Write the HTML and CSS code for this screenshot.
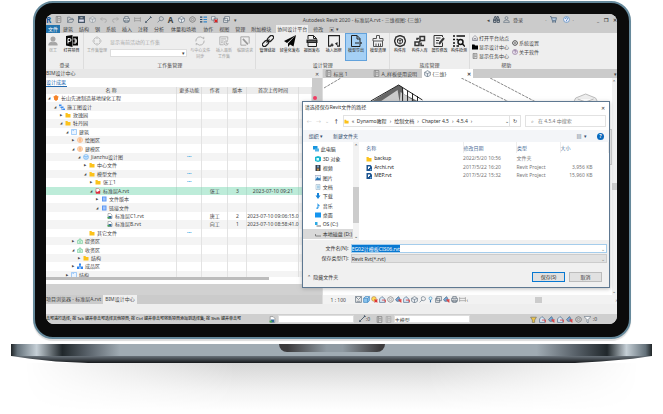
FILE: index.html
```html
<!DOCTYPE html>
<html lang="zh-CN">
<head>
<meta charset="utf-8">
<title>Autodesk Revit 2020</title>
<link rel="stylesheet" href="styles.css">
</head>
<body>
<svg class="defs" aria-hidden="true">
  <symbol id="folder" viewBox="0 0 12 12"><path fill="#fcc21b" d="M1 2h4l1 2h5v7H1z"/></symbol>
  <symbol id="doc" viewBox="0 0 12 12"><path fill="#5c97f5" d="M2 1h9v10H2z"/><path stroke="#fff" d="M4 4h5M4 6h5M4 8h5"/></symbol>
  <symbol id="box" viewBox="0 0 12 12"><path fill="#eaf4ff" stroke="#58a5f5" d="M1 1h10v10H1z"/><path stroke="#58a5f5" d="M3 3h3"/></symbol>
  <symbol id="target" viewBox="0 0 12 12"><circle cx="6" cy="6" r="5" fill="#fff3e6" stroke="#f59345"/><path fill="none" stroke="#f59345" d="M4 4h4v4H4zM6 2v8"/></symbol>
  <symbol id="globe" viewBox="0 0 12 12"><circle cx="6" cy="6" r="5" fill="#d7ecff" stroke="#4ca0ee"/><path fill="none" stroke="#4ca0ee" d="M2 5h8M3 8h6"/></symbol>
  <symbol id="root" viewBox="0 0 12 12"><path fill="#f5842a" d="M6 0l6 4-2 1v4l-4 3-4-3V5L0 4z"/></symbol>
  <symbol id="flow" viewBox="0 0 12 12"><path fill="#3b8cf0" d="M0 1h5v3H0zM4 5h5v3H4zM7 9h5v3H7z"/><path fill="none" stroke="#3b8cf0" d="M2 3v4h3M5 7v4h3"/></symbol>
  <symbol id="rvt" viewBox="0 0 12 12"><path fill="#fff" stroke="#777" d="M2 1h5l3 3v7H2z"/><path fill="#356b9b" d="M3 6h6v5H3z"/><path fill="#4caf50" d="M1 8h4v3H1z"/></symbol>
  <symbol id="rvtred" viewBox="0 0 12 12"><path fill="#fff" stroke="#b55" d="M2 1h5l3 3v7H2z"/><path fill="#e02d3c" d="M1 5l3 3 6-3v6H2z"/></symbol>
  <symbol id="zone" viewBox="0 0 12 12"><path fill="#e5f7ec" stroke="#57c084" d="M1 5h3V2h4v3h3v6H1z"/><path stroke="#57c084" d="M3 8h6M6 3v7"/></symbol>
  <symbol id="cubes" viewBox="0 0 12 12"><path fill="#2f86f0" d="M4 1h4v4H4zM0 7h5v5H0zM7 7h5v5H7zM5 5h2v3H5z"/></symbol>
  <symbol id="house" viewBox="0 0 12 12"><path fill="#eee" stroke="#556" d="M1 6l5-5 5 5v5H1zM4 11V7h4v4"/></symbol>
  <symbol id="cube" viewBox="0 0 12 12"><path fill="#e8edf2" stroke="#567" d="M1 4l5-3 5 3v5l-5 3-5-3zM1 4l5 2 5-2M6 6v6"/></symbol>
  <symbol id="bluecube" viewBox="0 0 12 12"><path fill="#8cc4ee" stroke="#2a78b8" d="M1 4l3-3h7v7l-3 3H1zM1 4h7l3-3M8 4v7"/></symbol>
  <symbol id="open" viewBox="0 0 12 12"><path fill="none" stroke="#567" d="M1 11V2h4l1 2h4v2M1 11l3-5h8l-3 5z"/></symbol>
  <symbol id="save" viewBox="0 0 12 12"><path fill="#dde" stroke="#456" stroke-width="2" d="M1 1h10v10H1zM3 1v4h6V1"/></symbol>
  <symbol id="undo" viewBox="0 0 12 12"><path fill="none" stroke="#a5a5a5" stroke-width="1.3" d="M4 2L1 5l3 3M1 5h7q3 0 3 3t-3 3"/></symbol>
  <symbol id="redo" viewBox="0 0 12 12"><path fill="none" stroke="#a5a5a5" stroke-width="1.3" d="M8 2l3 3-3 3M11 5H4Q1 5 1 8t3 3"/></symbol>
  <symbol id="print" viewBox="0 0 12 12"><path fill="#eee" stroke="#456" d="M3 4V1h6v3M1 4h10v5H1zM3 7h6v4H3z"/></symbol>
  <symbol id="measure" viewBox="0 0 12 12"><path fill="none" stroke="#888" d="M1 2v8M11 2v8M1 4h10M1 8h10"/></symbol>
  <symbol id="pen" viewBox="0 0 12 12"><path stroke="#456" stroke-width="1.500" d="M2 10l8-8"/><path fill="#456" d="M0 12l1-4 3 3zM9 0l3 3-2 1-2-2z"/></symbol>
  <symbol id="tag" viewBox="0 0 12 12"><path fill="none" stroke="#567" d="M1 11l4-4M4 4q0-3 3-3t4 3-3 4-4-4"/></symbol>
  <symbol id="list" viewBox="0 0 12 12"><path stroke="#246" stroke-width="2" d="M0 2h4M0 6h4M0 10h4"/><path stroke="#38c" stroke-width="2" d="M6 2h6M6 6h6M6 10h6"/></symbol>
  <symbol id="close-win" viewBox="0 0 12 12"><path fill="#eee" stroke="#567" d="M1 1h6v6H1zM5 4h6v7H5z"/><path stroke="#d22" stroke-width="2" d="M6 6l5 5M11 6l-5 5"/></symbol>
  <symbol id="win" viewBox="0 0 12 12"><path fill="#eee" stroke="#456" d="M3 1h8v7H3zM1 4h7v7H1z"/></symbol>
  <symbol id="scene" viewBox="0 0 12 12"><path fill="#eee" stroke="#456" d="M1 1h10v10H1zM1 1l5 5 5-5M3 9h6"/></symbol>
  <symbol id="bino" viewBox="0 0 12 12"><path fill="none" stroke="#345" stroke-width="1.4" d="M3 1h2v6H1zM7 1h2l2 6H7zM1 7h4v4H1zM7 7h4v4H7zM5 4h2"/></symbol>
  <symbol id="person" viewBox="0 0 12 12"><circle cx="6" cy="3.5" r="2.5" fill="none" stroke="#567"/><path fill="none" stroke="#567" d="M1 11q0-4 5-4t5 4z"/></symbol>
  <symbol id="bulb" viewBox="0 0 12 12"><circle cx="6" cy="4" r="2.500" fill="#dff" stroke="#3b78b0"/><path stroke="#3b78b0" stroke-width="2" d="M6 7v4"/></symbol>
  <symbol id="cart" viewBox="0 0 12 12"><path fill="#b9cce0" stroke="#246" d="M0 1h2l2 7h6l1-5H3"/><path fill="#246" d="M4 9h2v2H4zM8 9h2v2H8z"/></symbol>
  <symbol id="ask" viewBox="0 0 12 12"><circle cx="6" cy="6" r="5" fill="#eef" stroke="#357ab5"/><path fill="none" stroke="#357ab5" stroke-width="1.3" d="M4 5q0-2 2-2t2 1.500T6 7v2"/></symbol>
  <symbol id="askp" viewBox="0 0 12 12"><circle cx="6" cy="6" r="5" fill="#f5eef7" stroke="#6b4a7b"/><path fill="none" stroke="#6b4a7b" stroke-width="1.3" d="M4 5q0-2 2-2t2 1.500T6 7v2"/></symbol>
  <symbol id="user" viewBox="0 0 24 24"><path fill="#a6a6a6" d="M12 1a6 6 0 016 7c0 3-3 6-6 6s-6-3-6-6a6 6 0 016-7zM1 23v-4q2-4 7-5 4 2 8 0 5 1 7 5v4z"/></symbol>
  <symbol id="project" viewBox="0 0 24 24"><path fill="#080808" d="M0 2l13-2v24L0 21zM14 3h10v18H14z"/><path fill="none" stroke="#fff" stroke-width="2" d="M4 17V7h3q3 0 3 3t-3 3H4M15 8h5v8h-5M17 12h5"/></symbol>
  <symbol id="workset" viewBox="0 0 24 24"><path fill="none" stroke="#a6a6a6" stroke-width="2" d="M9 4a9 9 0 00-5 5M15 4a9 9 0 015 5M20 15a9 9 0 01-5 5M9 20a9 9 0 01-5-5M12 1v6M12 17v6M1 12h6M17 12h6"/></symbol>
  <symbol id="sync" viewBox="0 0 24 24"><path fill="none" stroke="#a9a9a9" stroke-width="2" d="M2 13a10 10 0 0117-8l2 2V2M22 11A10 10 0 015 19l-2-2v5"/></symbol>
  <symbol id="latest" viewBox="0 0 24 24"><path fill="none" stroke="#a9a9a9" stroke-width="2" d="M11 21H2V2h19v7M5 7h12M5 12h6M5 16h4M22 17a5 5 0 11-2-4v-3M17 14v4h3"/></symbol>
  <symbol id="request" viewBox="0 0 24 24"><path fill="none" stroke="#999" stroke-width="2" d="M15 22H2V2h20v16"/><path stroke="#999" stroke-width="4" d="M7 7l12 13"/></symbol>
  <symbol id="chain" viewBox="0 0 24 24"><g fill="none" stroke="#222" stroke-width="2.500"><rect x="10" y="3" width="14" height="8" rx="4" transform="rotate(-45 17 7)"/><rect x="0" y="13" width="14" height="8" rx="4" transform="rotate(-45 7 17)"/><path d="M9 15l6-6"/></g></symbol>
  <symbol id="plane" viewBox="0 0 24 24"><path fill="#050505" d="M24 0L0 12l6 4zM24 0L8 17v7l4-5 7 4z"/></symbol>
  <symbol id="publish" viewBox="0 0 24 24"><path fill="none" stroke="#222" stroke-width="2" d="M4 8V1h11l6 6v2M4 16v7h17v-7M15 1v6h6"/><path fill="#222" d="M1 9h22v7H1z"/><path stroke="#bbb" d="M4 12.500h16"/></symbol>
  <symbol id="frame" viewBox="0 0 24 24"><path fill="none" stroke="#222" stroke-width="2.500" d="M6 22H1V1h22v21h-5M23 22h-5M8 17v6M5 20h6"/><path fill="#222" d="M14 17l5-3v8z"/></symbol>
  <symbol id="export" viewBox="0 0 24 24"><path fill="none" stroke="#222" stroke-width="2" d="M20 12V7l-6-6H3v22h17v-3M14 1v7h6M10 16h13M19 12l4 4-4 4"/></symbol>
  <symbol id="clean" viewBox="0 0 24 24"><path fill="none" stroke="#555" stroke-width="2" d="M9 7V1h6v6h7v5H2V7zM3 12v11h18V12M8 23v-6M13 23v-6M17 23v-6"/></symbol>
  <symbol id="library" viewBox="0 0 24 24"><path fill="none" stroke="#333" stroke-width="3" d="M12 1l8 3 3 8-3 8-8 3-8-3-3-8 3-8z"/><path fill="none" stroke="#333" stroke-width="2" d="M7 9l5-2 5 2v6l-5 3-5-3zM7 9l5 2 5-2M12 11v7"/></symbol>
  <symbol id="import" viewBox="0 0 24 24"><path fill="none" stroke="#333" stroke-width="3" d="M12 3h9v8h-9zM2 14h8v7H2zM14 15v6h6M6 10V7h4M9 15l6-5"/></symbol>
  <symbol id="edit" viewBox="0 0 24 24"><path fill="none" stroke="#333" stroke-width="2" d="M19 15v8H2V1h17v3M6 6h9M6 11h6M6 16h4"/><path stroke="#333" stroke-width="4" d="M12 18L22 6"/></symbol>
  <symbol id="detect" viewBox="0 0 24 24"><path stroke="#111" stroke-width="3" d="M0 2h4M7 2h17M0 9h4M0 16h4M0 22h4M7 9h3M7 22h5"/><circle cx="15" cy="14" r="5" fill="none" stroke="#111" stroke-width="3"/><path stroke="#111" stroke-width="3" d="M19 18l5 5"/></symbol>
  <symbol id="gear" viewBox="0 0 12 12"><path fill="none" stroke="#333" stroke-width="1.500" d="M6 1l4 2 1 3-1 3-4 2-4-2-1-3 1-3z"/><circle cx="6" cy="6" r="2" fill="none" stroke="#333"/></symbol>
  <symbol id="blackfolder" viewBox="0 0 12 12"><path d="M0 1h5l1 2h6v8H0z"/></symbol>
  <symbol id="sheet" viewBox="0 0 12 12"><path fill="#ddd" stroke="#666" d="M2 1h8v10H2zM4 1v10M5 4h4M5 7h4"/></symbol>
  <symbol id="pc" viewBox="0 0 12 12"><path fill="#1795df" d="M0 0h9v7H0z"/><path fill="#50b5e9" d="M4 5h8v6H4z"/></symbol>
  <symbol id="obj3d" viewBox="0 0 12 12"><path fill="#18b5cf" d="M0 2l6-2 6 2v8l-6 2-6-2z"/><path fill="#d8ffff" d="M3 4h5v5H3z"/></symbol>
  <symbol id="video" viewBox="0 0 12 12"><path fill="#38424e" d="M1 0h10v12H1z"/><path fill="#789fc4" d="M4 1h4v4H4z"/><path fill="#c88e45" d="M4 7h4v4H4z"/></symbol>
  <symbol id="photo" viewBox="0 0 12 12"><path fill="#d9edfa" stroke="#88a" d="M0 1h12v10H0z"/><path fill="#2375b7" d="M1 9l4-5 3 3 3-2v5H1z"/></symbol>
  <symbol id="page" viewBox="0 0 12 12"><path fill="#f4faff" stroke="#8aa4b8" d="M2 1h8v10H2z"/><path stroke="#4b9ac8" d="M4 4h5M4 6h5M4 8h5"/></symbol>
  <symbol id="down" viewBox="0 0 12 12"><path fill="#1683d8" d="M4 0h4v5h3l-5 7-5-7h3z"/></symbol>
  <symbol id="music" viewBox="0 0 12 12"><path fill="#168fe5" d="M5 0q1 3 4 4v3L7 5v5q-1 2-4 2V9h2z"/></symbol>
  <symbol id="desk" viewBox="0 0 12 12"><path fill="#1595ef" d="M0 1h12v10H0z"/></symbol>
  <symbol id="drive" viewBox="0 0 12 12"><path fill="#777" d="M3 9h9v2H3z"/><path fill="#2daae4" d="M0 2h5v6H0z"/></symbol>
  <symbol id="drived" viewBox="0 0 12 12"><path fill="none" stroke="#666" stroke-width="1.500" d="M1 6v4h11"/></symbol>
  <symbol id="revit" viewBox="0 0 12 12"><path fill="#1c5591" d="M1 0h8l3 3v9H1z"/><path fill="#fff" d="M4 3h4v3H6v2H4z"/><path fill="#70a8dc" d="M8 8h3v3H8z"/></symbol>
  <symbol id="lamp" viewBox="0 0 12 12"><circle cx="5" cy="5" r="4" fill="#ffdc55" stroke="#a75"/><path stroke="#d33" stroke-width="2" d="M6 6l5 5M11 6l-5 5"/></symbol>
  <symbol id="crop" viewBox="0 0 12 12"><path fill="#dbe8f5" stroke="#357" d="M1 5l4-4 5 4v6H1z"/><path fill="none" stroke="#d44" stroke-width="1.500" d="M5 7h6v4"/></symbol>
  <symbol id="pick" viewBox="0 0 12 12"><path fill="#79a8d5" stroke="#357" d="M1 6l5-5 2 3v5H3z"/><path stroke="#d44" stroke-width="2" d="M6 6l5 5M10 5v4"/></symbol>
  <symbol id="filter" viewBox="0 0 12 12"><path fill="#fff" stroke="#567" d="M0 1h12L7 6v6L5 10V6z"/></symbol>
  <symbol id="cup" viewBox="0 0 12 12"><path fill="#edc348" stroke="#665" d="M1 2h10L8 7v4H4V7z"/></symbol>
</svg>

<main class="laptop">
<div class="lid">
<div class="screen">
  <header class="titlebar">
    <div class="quick">
      <b class="logo">R</b><svg><use href="#sheet"/></svg><svg><use href="#open"/></svg><svg><use href="#save"/></svg><svg class="dim"><use href="#cube"/></svg><svg><use href="#undo"/></svg><svg><use href="#redo"/></svg><svg><use href="#print"/></svg><svg><use href="#measure"/></svg><svg><use href="#pen"/></svg><svg><use href="#tag"/></svg><b class="letter">A</b><svg><use href="#cube"/></svg><svg class="dim"><use href="#gear"/></svg><svg><use href="#list"/></svg><svg><use href="#close-win"/></svg><svg><use href="#win"/></svg><span>▾</span>
    </div>
    <h1>Autodesk Revit 2020 - 标准层A.rvt - 三维视图: {三维}</h1>
    <div class="account"><span>◂</span><svg><use href="#bino"/></svg><svg><use href="#person"/></svg><span>登录</span><span class="push">·</span><svg><use href="#cart"/></svg><svg class="apart"><use href="#ask"/></svg><span>·</span><span class="window"><b>_</b><b>❐</b><b>✕</b></span></div>
  </header>
  <nav class="tabs">
    <a class="file" href="#">文件</a><a href="#">建筑</a><a href="#">结构</a><a href="#">钢</a><a href="#">系统</a><a href="#">插入</a><a href="#">注释</a><a href="#">分析</a><a class="site" href="#">体量和场地</a><a href="#">协作</a><a href="#">视图</a><a href="#">管理</a><a href="#">附加模块</a><a class="on" href="#">协同设计平台</a><a href="#">修改</a><a href="#">▣ ▾</a>
  </nav>
  <section class="ribbon">
    <div class="group g1"><div class="tools">
      <button class="tool off small"><svg><use href="#user"/></svg>张工</button><button class="tool"><svg><use href="#project"/></svg>打开项目</button>
    </div><footer>登录</footer></div>
    <div class="group g2"><div class="tools">
      <button class="tool off wide"><svg><use href="#workset"/></svg>工作集管理</button>
      <div class="combo"><label for="ws">显示当前活动的工作集</label><div class="wsbox"><select id="ws"><option></option></select><span>▾</span></div></div>
      <button class="tool off wide"><svg><use href="#sync"/></svg>与中心文件<br>同步</button><button class="tool off"><svg><use href="#latest"/></svg>插入最新<br>工作集</button><button class="tool off"><svg><use href="#request"/></svg>编辑请求</button>
    </div><footer>工作集管理</footer></div>
    <div class="group g3"><div class="tools">
      <button class="tool"><svg><use href="#chain"/></svg>管理链接</button><button class="tool"><svg><use href="#plane"/></svg>轻量化发布</button><button class="tool"><svg><use href="#publish"/></svg>视图发布</button><button class="tool"><svg><use href="#frame"/></svg>插入图框</button><button class="tool picked"><svg><use href="#export"/></svg>模型导出</button><button class="tool"><svg><use href="#clean"/></svg>模型清理</button>
    </div><footer>设计管理</footer></div>
    <div class="group g4"><div class="tools">
      <button class="tool"><svg><use href="#library"/></svg>构件库</button><button class="tool"><svg><use href="#import"/></svg>构件入库</button><button class="tool"><svg><use href="#edit"/></svg>属性修改</button><button class="tool"><svg><use href="#detect"/></svg>构件检测</button>
    </div><footer>族库管理</footer></div>
    <div class="group g5"><div class="tools links">
      <div><a href="#"><svg><use href="#house"/></svg>打开平台站点</a><a href="#"><svg><use href="#blackfolder"/></svg>显示设计中心</a><a href="#"><svg><use href="#sheet"/></svg>显示任务中心</a></div>
      <div><a href="#"><svg><use href="#gear"/></svg>系统设置</a><a href="#"><svg><use href="#askp"/></svg>关于软件</a></div>
    </div><footer>帮助</footer></div>
  </section>

  <div class="work">
    <section class="browser">
      <div class="panelhead"><span>BIM设计中心</span><button aria-label="关闭">✕</button></div>
      <div class="panelbody">
        <div class="results">
          <h2>设计成果</h2>
          <table>
            <thead><tr><th>名 称</th><th>更多功能</th><th>作者</th><th>版本</th><th>首次上传时间</th><th></th></tr></thead>
            <tbody>
              <tr><td class="l0"><i>◢</i><svg><use href="#root"/></svg>长山先进制造基地绿化工程</td><td></td><td></td><td></td><td></td><td></td></tr>
              <tr><td class="l1"><i>◢</i><svg><use href="#flow"/></svg>施工图设计</td><td></td><td></td><td></td><td></td><td></td></tr>
              <tr><td class="l2"><i>▶</i><svg><use href="#folder"/></svg>玫瑰园</td><td></td><td></td><td></td><td></td><td></td></tr>
              <tr><td class="l2"><i>◢</i><svg><use href="#folder"/></svg>牡丹园</td><td></td><td></td><td></td><td></td><td></td></tr>
              <tr><td class="l3"><i>◢</i><svg><use href="#box"/></svg>建筑</td><td></td><td></td><td></td><td></td><td></td></tr>
              <tr><td class="l4"><i>▶</i><svg><use href="#target"/></svg>绘图区</td><td></td><td></td><td></td><td></td><td></td></tr>
              <tr><td class="l4"><i>◢</i><svg><use href="#target"/></svg>建模区</td><td></td><td></td><td></td><td></td><td></td></tr>
              <tr><td class="l5"><i>◢</i><svg><use href="#globe"/></svg>Jianzhu设计图</td><td>•••</td><td></td><td></td><td></td><td></td></tr>
              <tr><td class="l6"><i>▶</i><svg><use href="#folder"/></svg>中心文件</td><td></td><td></td><td></td><td></td><td></td></tr>
              <tr><td class="l6"><i>◢</i><svg><use href="#folder"/></svg>模型文件</td><td>•••</td><td></td><td></td><td></td><td></td></tr>
              <tr><td class="l7"><i>▶</i><svg><use href="#folder"/></svg>张工1</td><td>•••</td><td></td><td></td><td></td><td></td></tr>
              <tr class="sel"><td class="l7"><i>◢</i><svg><use href="#rvtred"/></svg>标准层A.rvt</td><td></td><td>张工</td><td>3</td><td>2023-07-10 09:21</td><td></td></tr>
              <tr><td class="l8"><i>▶</i><svg><use href="#doc"/></svg>文件版本</td><td></td><td></td><td></td><td></td><td></td></tr>
              <tr><td class="l8"><i>◢</i><svg><use href="#doc"/></svg>链接文件</td><td></td><td></td><td></td><td></td><td></td></tr>
              <tr><td class="l9"><i></i><svg><use href="#rvt"/></svg>标准层C1.rvt</td><td></td><td>唐工</td><td>2</td><td>2023-07-10 09:06:15.0</td><td></td></tr>
              <tr><td class="l9"><i></i><svg><use href="#rvt"/></svg>标准层B.rvt</td><td></td><td>向工</td><td>1</td><td>2023-07-10 08:58:41.0</td><td></td></tr>
              <tr><td class="l6"><i></i><svg><use href="#folder"/></svg>其它文件</td><td>•••</td><td></td><td></td><td></td><td></td></tr>
              <tr><td class="l4"><i>▶</i><svg><use href="#zone"/></svg>提资区</td><td></td><td></td><td></td><td></td><td></td></tr>
              <tr><td class="l4"><i>◢</i><svg><use href="#zone"/></svg>收资区</td><td></td><td></td><td></td><td></td><td></td></tr>
              <tr><td class="l5"><i>▶</i><svg><use href="#folder"/></svg>结构</td><td></td><td></td><td></td><td></td><td></td></tr>
              <tr><td class="l4"><i>▶</i><svg><use href="#cubes"/></svg>成品区</td><td></td><td></td><td></td><td></td><td></td></tr>
              <tr><td class="l3"><i>▶</i><svg><use href="#box"/></svg>结构</td><td></td><td></td><td></td><td></td><td></td></tr>
            </tbody>
          </table>
          <div class="hscroll"></div>
        </div>
        <div class="gutter"><span class="dot"></span></div>
      </div>
      <div class="blank"></div>
      <div class="docks"><a href="#">项目浏览器 - 标准层A.rvt</a><a class="on" href="#">BIM设计中心</a></div>
    </section>

    <section class="view">
      <div class="viewtabs"><a href="#"><svg><use href="#sheet"/></svg>标高 1</a><a href="#"><svg><use href="#sheet"/></svg>A_样板使用说明</a><a class="on" href="#"><svg><use href="#cube"/></svg>{三维}<b>✕</b></a><span>▾</span></div>
      <div class="canvas">
        <svg class="model" viewBox="0 0 291 25" preserveAspectRatio="none">
          <path fill="none" stroke="#888" stroke-dasharray="3 1" d="M1 10L18 0M139 0l48 24M168 0l46 24"/>
          <path fill="#666" d="M48 24L76 7l4 2 1 7 18 9H48z"/><path fill="#ccc" d="M57 24l18-12 2 12zM78 14l12 8-4 3h-9z"/>
          <path fill="none" stroke="#222" d="M48 23L76 7l24 15M80 10v14M85 13v12M90 15v10M95 18v6"/>
          <path fill="#eee" stroke="#bbb" d="M252 24l2-4 10-4 10 4 2 4zM256 21l8 3 8-3"/>
        </svg>
        <div class="navbar"></div>
        <div class="vscroll"><span>⌃</span><i></i><span>⌄</span></div>
      </div>
      <div class="viewbar"><span class="scale">1 : 100</span><svg><use href="#scene"/></svg><svg><use href="#bluecube"/></svg><svg><use href="#lamp"/></svg><svg><use href="#crop"/></svg><svg class="dim"><use href="#gear"/></svg><svg><use href="#pick"/></svg><svg><use href="#crop"/></svg><svg><use href="#cube"/></svg><svg><use href="#tag"/></svg><svg><use href="#bulb"/></svg><svg><use href="#win"/></svg><svg><use href="#pick"/></svg><svg><use href="#print"/></svg><svg><use href="#measure"/></svg><span>‹</span><i class="thumb"></i><span class="push">›</span></div>
    </section>

    <section class="dialog" role="dialog" aria-labelledby="dt">
      <div class="dtitle"><span id="dt">请选择保存Revit文件的路径</span><button aria-label="关闭">✕</button></div>
      <div class="path">
        <span class="arrows"><em>←</em><em>→</em><em>⌄</em><b>↑</b></span>
        <div class="address"><svg><use href="#folder"/></svg><span>« &nbsp;Dynamo教程</span><span>›</span><span>绘制文档</span><span>›</span><span>Chapter 4.5</span><span>›</span><span>4.5.4</span><span>›</span><span class="push">⌄</span></div>
        <button class="refresh" aria-label="刷新">↻</button>
        <input class="search" type="text" aria-label="搜索" placeholder="⌕&nbsp; &nbsp;在 4.5.4 中搜索">
      </div>
      <div class="dtools"><button>组织 ▾</button><button>新建文件夹</button><button class="push" aria-label="视图">▤ &nbsp;▾</button><button class="help" aria-label="帮助">?</button></div>
      <div class="files">
        <ul class="places">
          <li class="top"><svg><use href="#pc"/></svg>此电脑</li><li><svg><use href="#obj3d"/></svg>3D 对象</li><li><svg><use href="#video"/></svg>视频</li><li><svg><use href="#photo"/></svg>图片</li><li><svg><use href="#page"/></svg>文档</li><li><svg><use href="#down"/></svg>下载</li><li><svg><use href="#music"/></svg>音乐</li><li><svg><use href="#desk"/></svg>桌面</li><li><svg><use href="#drive"/></svg>OS (C:)</li><li class="on"><svg><use href="#drived"/></svg>本地磁盘 (D:)</li>
        </ul>
        <div class="sidebar-scroll"><span>⌃</span><i></i><span>⌄</span></div>
        <div class="list"><table>
          <thead><tr><th>名称</th><th>修改日期</th><th>类型</th><th>大小</th></tr></thead>
          <tbody>
            <tr><td><svg><use href="#folder"/></svg>backup</td><td>2022/5/20 10:56</td><td>文件夹</td><td></td></tr>
            <tr><td><svg><use href="#revit"/></svg>Archi.rvt</td><td>2017/5/22 16:20</td><td>Revit Project</td><td>3,956 KB</td></tr>
            <tr><td><svg><use href="#revit"/></svg>MEP.rvt</td><td>2017/5/22 15:32</td><td>Revit Project</td><td>15,960 KB</td></tr>
          </tbody>
        </table></div>
      </div>
      <div class="form">
        <label for="fn">文件名(N):</label><div class="filebox"><input id="fn" type="text" value="EG02计模板CIS06.rvt"><span>⌄</span></div>
        <label for="ft">保存类型(T):</label><div class="typebox"><select id="ft"><option>Revit Rvt(*.rvt)</option></select><span>⌄</span></div>
      </div>
      <div class="actions"><button class="hide">⌃ &nbsp;隐藏文件夹</button><button class="save">保存(S)</button><button class="cancel">取消</button></div>
    </section>
  </div>
  <div class="spacer"></div>
  <footer class="status">
    <span class="hint">击可进行选择; 按 Tab 键并单击可选择其他项目; 按 Ctrl 键并单击可将新项目添加到选择集; 按 Shift 键并单击可</span>
    <svg><use href="#rvt"/></svg><select class="s1" aria-label="工作集"><option></option></select><span class="zero"><svg><use href="#pen"/></svg>:0</span><svg><use href="#sheet"/></svg><svg class="dim"><use href="#sheet"/></svg><select class="s2" aria-label="设计选项"><option>主模型</option></select>
    <span class="tray"><svg><use href="#cup"/></svg><svg><use href="#crop"/></svg><svg><use href="#pick"/></svg><svg><use href="#crop"/></svg><svg><use href="#pick"/></svg><svg class="dim"><use href="#gear"/></svg><svg><use href="#filter"/></svg>:0</span>
  </footer>
</div>
</div>
<div class="base"><div class="notch"></div></div>
<div class="under"></div>
<div class="shadow"></div>
</main>
</body>
</html>
```
FILE: styles.css
```css
* { box-sizing: border-box; }
body { margin: 0; background: #fff; overflow: hidden; color: #444; font: 5px/8px "Noto Sans", "Noto Sans CJK SC", sans-serif; }
button, input, select { font: inherit; color: inherit; margin: 0; padding: 0; border: 0; border-radius: 0; background: none; appearance: none; white-space: nowrap; }
a { color: inherit; text-decoration: none; }
h1, h2, ul { margin: 0; padding: 0; font: inherit; list-style: none; }
svg { width: 7px; height: 7px; flex: none; }
table { border-collapse: collapse; }
.defs { position: absolute; width: 0; height: 0; }
.push { margin-left: auto; }
.dim { opacity: .5; }

/* laptop body */
.laptop { padding: 1px 11px 0; }
.lid { margin: 0 21px 0 22px; padding: 11px 12px 13px 11px; background: #0b0b0b; border: 2px solid #66899b; border-radius: 20px; box-shadow: 0 2px 1px #ddd; }
.screen { position: relative; overflow: hidden; border-radius: 8px; background: #eee; white-space: nowrap; }
.base { height: 12px; margin-top: 5px; background: linear-gradient(90deg, #202527 0, #64717a 1%, #c5cfd6 4%, #20272b 8%, #59626a 12%, #a0abb3 17%, #a0abb3 82%, #59626a 88%, #20272b 93%, #c5cfd6 96%, #64717a 99%, #202527); }
.notch { width: 106px; height: 8px; margin: 0 auto; border-radius: 0 0 8px 8px; background: linear-gradient(90deg, #3c3b3d 8%, #8f9aa2 45%, #8f9aa2 60%, #3c3b3d 95%); }
.under { height: 7px; background: linear-gradient(#69727a, #15181b); clip-path: polygon(0 0, 100% 0, 97% 40%, 92% 80%, 88% 100%, 12% 100%, 7% 80%, 3% 40%); }
.shadow { height: 48px; background: linear-gradient(#d6d6d6, #f3f3f3 60%, #fff); mask-image: linear-gradient(90deg, transparent 2%, #000 35%, #000 65%, transparent 98%); }

/* title and ribbon */
.titlebar { display: flex; align-items: center; height: 11px; background: #cbcbcb; }
.quick { flex: 191; display: flex; align-items: center; justify-content: space-between; }
.logo { color: #19599b; font-size: 8px; }
.letter { font-size: 8px; }
.titlebar h1 { flex: 250; text-align: center; }
.account { flex: 130; display: flex; align-items: center; gap: 3px; }
.account .apart { margin-left: 3px; }
.window { display: flex; gap: 5px; margin-left: 20px; }
.tabs { display: flex; gap: 6px; height: 8px; background: #cbcbcb; }
.tabs .file { width: 14px; margin-right: -3px; text-align: center; color: #fff; background: #2273ad; }
.tabs .site { padding: 0 1px; }
.tabs .on { margin: 0 -1px; padding: 0 1px; background: #eee; }
.ribbon { display: flex; height: 36px; padding-right: 13%; background: #eee; }
.group { display: flex; flex-direction: column; min-width: 0; border-right: 1px solid #ddd; }
.group footer { height: 8px; line-height: 8px; text-align: center; }
.g1 { flex: 37; } .g2 { flex: 172; } .g3 { flex: 133; } .g4 { flex: 79; }
.g5 { flex: 73; border: 0; }
.tools { flex: 1; display: flex; }
.tool { flex: 21 0 0; min-width: 0; display: flex; flex-direction: column; align-items: center; padding-top: 2px; font-size: 4px; font-weight: 500; line-height: 6px; }
.tool svg { width: 12px; height: 12px; margin-bottom: 1px; }
.tool.small { flex-grow: 13; }
.tool.small svg { width: 9px; }
.tool.wide { flex-grow: 26; }
.tool.off { color: #aaa; }
.tool.off svg { width: 10px; }
.tool.picked { background: #a5d0f5; box-shadow: inset 0 0 0 1px #62a2dc; }
.combo { flex: 77 0 0; display: flex; flex-direction: column; justify-content: center; gap: 3px; color: #aaa; }
.wsbox { display: flex; height: 8px; line-height: 7px; padding-right: 1px; background: #fff; border: 1px solid #ddd; color: #444; }
.wsbox select { flex: 1; }
.links { align-items: center; gap: 3px; padding-left: 2px; }
.links div { display: flex; flex-direction: column; gap: 1px; }
.links a { display: flex; align-items: center; gap: 1px; }
.links svg { width: 6px; height: 6px; }

/* project browser */
.work { position: relative; display: flex; height: 235px; }
.browser { flex: 276; min-width: 0; display: flex; flex-direction: column; background: #fff; }
.panelhead { display: flex; justify-content: space-between; height: 9px; padding-right: 3px; background: #e7e7e7; }
.panelbody { flex: 1; min-height: 0; display: flex; }
.results { flex: 1; min-width: 0; display: flex; flex-direction: column; overflow: hidden; }
.results h2 { width: 21px; height: 9px; color: #246bb0; border-bottom: 1px solid #246bb0; }
.results table { display: flex; flex-direction: column; flex: 1; min-height: 0; overflow: hidden; }
.results tr { display: grid; grid-template-columns: 131fr 25fr 26fr 19fr 52fr 12fr; min-height: 0; }
.results th { height: 7px; line-height: 7px; padding: 0; font-weight: 400; background: #ededed; border-right: 1px solid #ddd; }
.results tbody { display: grid; grid-auto-rows: 1fr; height: 185px; flex: none; }
.results td { display: flex; align-items: center; justify-content: center; min-width: 0; padding: 0; border-right: 1px solid #e3e3e3; }
.results td:first-child { justify-content: flex-start; gap: 2px; }
.results td:nth-child(2) { color: #279be0; font-size: 4px; }
.results td i { width: 3px; font: 3px/8px "DejaVu Sans", sans-serif; }
.results td svg { width: 6px; height: 6px; }
.results tr:nth-child(even) td { background: #f4f4f4; }
.results tr.sel td { background: #bdecd9; border-color: #b0dccb; }
.results td.l0 { padding-left: 2px; } .results td.l1 { padding-left: 8px; }
.results td.l2 { padding-left: 14px; } .results td.l3 { padding-left: 20px; }
.results td.l4 { padding-left: 26px; } .results td.l5 { padding-left: 32px; }
.results td.l6 { padding-left: 38px; } .results td.l7 { padding-left: 44px; }
.results td.l8 { padding-left: 50px; } .results td.l9 { padding-left: 56px; }
.hscroll { height: 3px; width: 84%; margin-bottom: 4px; background: #bcbcbc; }
.gutter { width: 10px; padding: 18px 0 0 1px; background: #cbcbcb; }
.dot { display: block; width: 4px; height: 4px; border-radius: 50%; background: #f23c62; }
.blank { height: 11px; background: #d1d1d1; }
.docks { display: flex; height: 9px; background: #cbcbcb; }
.docks a { padding: 0 2px 0 0; }
.docks .on { padding: 0 2px; background: #efefef; }

/* drawing view */
.view { flex: 295; min-width: 0; display: flex; flex-direction: column; border-left: 1px solid #ddd; background: #fff; }
.viewtabs { display: flex; align-items: center; height: 9px; background: #cbcbcb; }
.viewtabs a { display: flex; align-items: center; gap: 2px; width: 48px; height: 9px; padding-left: 2px; }
.viewtabs a + a { width: 51px; }
.viewtabs .on { background: #fff; }
.viewtabs b { margin: 0 2px 0 auto; }
.viewtabs span { margin-left: auto; }
.canvas { flex: 1; display: flex; align-items: flex-start; }
.model { flex: 1; min-width: 0; height: 25px; }
.navbar { width: 4px; height: 36px; margin: 51px 0 0 -4px; background: #f3f3f3; border: 1px solid #ccc; }
.vscroll { width: 5px; align-self: stretch; display: flex; flex-direction: column; justify-content: space-between; background: #f1f1f1; }
.vscroll i { height: 7px; background: #ccc; }
.viewbar { display: flex; align-items: center; gap: 1px; height: 9px; padding-left: 8px; background: #f2f2f2; }
.viewbar .scale { width: 23px; }
.viewbar .thumb { width: 7px; height: 6px; margin-left: 66px; background: #ccc; }

/* save dialog */
.dialog { position: absolute; top: 32px; right: 7px; width: 54%; display: flex; flex-direction: column; background: #fff; border: 1px solid #5e7891; box-shadow: 0 1px 4px #8888; color: #333; }
.dtitle { display: flex; justify-content: space-between; height: 13px; padding: 0 4px 0 2px; line-height: 11px; }
.path { display: flex; align-items: center; gap: 4px; height: 15px; padding: 0 3px 3px 4px; }
.arrows { width: 32px; display: flex; justify-content: space-between; }
.arrows em { color: #bbb; font-style: normal; }
.address { flex: 172; display: flex; align-items: center; gap: 3px; height: 12px; border: 1px solid #e2e2e2; }
.address svg { width: 5px; }
.refresh { width: 12px; height: 12px; margin-left: -5px; border: 1px solid #e2e2e2; }
.search { flex: 77; min-width: 0; height: 12px; padding-left: 5px; border: 1px solid #e2e2e2; }
.search::placeholder { color: #777; }
.dtools { display: flex; align-items: center; gap: 10px; height: 12px; padding: 0 5px 0 6px; background: #f3f5f8; color: #304a6c; }
.help { width: 7px; height: 7px; line-height: 7px; border-radius: 50%; color: #fff; background: #0868bd; font-weight: 700; }
.files { display: flex; height: 98px; }
.places { flex: 52; padding-top: 2px; }
.places li { display: flex; align-items: center; gap: 2px; height: 9px; padding-left: 12px; }
.places svg { width: 6px; height: 6px; }
.places .top { height: 10px; padding-left: 10px; }
.places .on { height: 10px; background: #d9d9d9; }
.places li:nth-child(3n) { height: 10px; }
.sidebar-scroll { width: 6px; display: flex; flex-direction: column; align-items: center; background: #f2f2f2; }
.sidebar-scroll i { width: 6px; height: 36px; margin: auto 0 9px; background: #ccc; }
.list { flex: 250; padding-left: 7px; }
.list table { width: 100%; table-layout: fixed; }
.list th, .list td { height: 8px; padding: 0; text-align: left; font-weight: 400; color: #777; }
.list th { height: 11px; color: #476b95; border-right: 1px solid #eee; }
.list th:nth-child(1) { width: 40%; } .list th:nth-child(2) { width: 22%; } .list th:nth-child(3) { width: 18%; }
.list tbody tr:first-child td { height: 10px; }
.list td:first-child { color: #222; }
.list td:last-child { padding-right: 16px; text-align: right; }
.list td svg { width: 6px; height: 6px; margin-right: 2px; vertical-align: middle; }
.form { display: grid; grid-template-columns: 46px 1fr; gap: 1px 2px; padding: 4px 2px 0 0; background: #f0f0f0; }
.form label { text-align: right; line-height: 9px; }
.filebox, .typebox { display: flex; align-items: center; height: 9px; border: 1px solid #a5cdec; background: #fff; }
.typebox { background: #e1e1e1; border-color: #ccc; }
.form input { width: 48px; height: 7px; color: #fff; background: #0878d1; }
.form select { flex: 1; }
.form span { margin-left: auto; padding-right: 1px; color: #777; }
.actions { display: flex; align-items: center; gap: 4px; height: 24px; padding: 4px 7px 0 4px; background: #f0f0f0; }
.actions .hide { margin-right: auto; }
.actions .save, .actions .cancel { width: 33px; height: 10px; line-height: 8px; background: #e1e1e1; border: 1px solid #bcbcbc; }
.actions .save { border-color: #0878d1; }

/* status bar */
.spacer { height: 10px; background: #eee; }
.status { display: flex; align-items: center; gap: 2px; height: 10px; background: #cfcfcf; }
.hint { flex: 0 0 221px; overflow: hidden; font-size: 4px; font-weight: 500; color: #222; }
.status select { height: 8px; background: #fff; border: 1px solid #ddd; }
.s1 { flex: 76; } .s2 { flex: 76; }
.zero { display: flex; width: 18px; padding-left: 3px; }
.tray { flex: 129; display: flex; align-items: center; justify-content: flex-end; gap: 2px; padding-right: 20px; }
```
